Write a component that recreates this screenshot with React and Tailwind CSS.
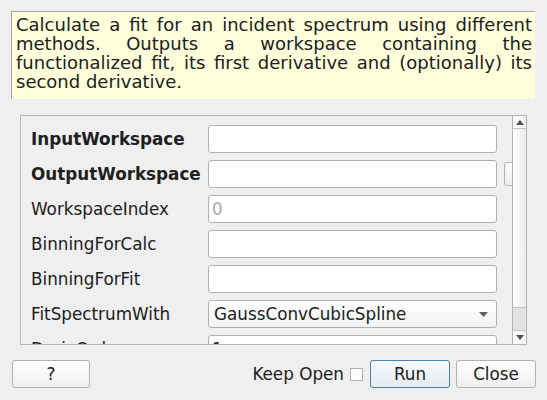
export default function App() {
  const rows = [
    { label: "InputWorkspace", bold: true },
    { label: "OutputWorkspace", bold: true, browse: true },
    { label: "WorkspaceIndex", placeholder: "0" },
    { label: "BinningForCalc" },
    { label: "BinningForFit" },
    { label: "FitSpectrumWith", combo: "GaussConvCubicSpline" },
    { label: "DerivOrder", value: "1" },
  ];
  return (
    <div className="w-[547px] h-[400px] bg-[#efefef] flex flex-col font-['DejaVu_Sans',sans-serif] text-[16.8px] text-[#202020] overflow-hidden">
      <div className="ml-[11px] mt-[11px] w-[524px] h-[88px] shrink-0 bg-[#ffffdc] border-t border-l border-[#a4a4a4] pl-[4px] pr-[3px] pt-[3px] text-[18px] leading-[19px]">
        <div className="text-justify [text-align-last:justify] whitespace-nowrap">Calculate a fit for an incident spectrum using different</div>
        <div className="text-justify [text-align-last:justify] whitespace-nowrap">methods. Outputs a workspace containing the</div>
        <div className="text-justify [text-align-last:justify] whitespace-nowrap">functionalized fit, its first derivative and (optionally) its</div>
        <div className="whitespace-nowrap">second derivative.</div>
      </div>

      <div className="ml-[20px] mt-[16px] w-[507px] h-[230px] shrink-0 border border-[#b4b4b4] flex">
        <div className="flex-1 overflow-hidden pt-[9px] pl-[10px] flex flex-col gap-[7px]">
          {rows.map((r) => (
            <div key={r.label} className="flex items-center h-[28px] shrink-0">
              <div className={"w-[177px] shrink-0 whitespace-nowrap pt-[2px] " + (r.bold ? "font-bold" : "")}>{r.label}</div>
              {r.combo ? (
                <div className="w-[289px] h-[28px] shrink-0 rounded-[3px] border border-[#b0b0b0] bg-linear-to-b from-[#fdfdfd] to-[#f3f3f3] flex items-center pl-[5px] pr-[8px]">
                  <span className="flex-1 pt-[2px]">{r.combo}</span>
                  <svg width="9" height="5" viewBox="0 0 9 5"><path d="M0 0 H9 L4.5 5 Z" fill="#606060" /></svg>
                </div>
              ) : (
                <div className="w-[289px] h-[28px] shrink-0 rounded-[3px] border border-[#b0b0b0] bg-white flex items-center pl-[3px] pt-[2px]">
                  {r.placeholder && <span className="text-[#a8a8a8]">{r.placeholder}</span>}
                  {r.value && <span>{r.value}</span>}
                </div>
              )}
              {r.browse && (
                <div className="ml-[7px] w-[40px] h-[24px] shrink-0 rounded-[3px] border border-[#b0b0b0] bg-linear-to-b from-[#fcfcfc] to-[#eeeeee]" />
              )}
            </div>
          ))}
        </div>
        <div className="w-[14px] shrink-0 border-l border-[#b4b4b4] flex flex-col">
          <div className="h-[13px] shrink-0 border-b border-[#c4c4c4] bg-linear-to-r from-white to-[#f0f0f0] flex items-center justify-center">
            <svg width="8" height="5" viewBox="0 0 8 5"><path d="M0 5 H8 L4 0 Z" fill="#505050" /></svg>
          </div>
          <div className="h-[178px] shrink-0 bg-linear-to-r from-white to-[#ececec]" />
          <div className="h-[24px] shrink-0 border-t border-b border-[#c4c4c4] bg-[#e3e3e3]" />
          <div className="flex-1 bg-linear-to-r from-white to-[#f0f0f0] flex items-center justify-center">
            <svg width="8" height="5" viewBox="0 0 8 5"><path d="M0 0 H8 L4 5 Z" fill="#505050" /></svg>
          </div>
        </div>
      </div>

      <div className="mt-[15px] h-[28px] flex items-center shrink-0">
        <button className="ml-[12px] w-[78px] h-[28px] pt-[2px] rounded-[3px] border border-[#b0b0b0] bg-linear-to-b from-[#fdfdfd] to-[#f0f0f0] flex items-center justify-center">?</button>
        <div className="flex-1" />
        <span className="whitespace-nowrap pt-[2px]">Keep Open</span>
        <div className="ml-[6px] w-[13px] h-[13px] border border-[#b0b0b0] bg-white" />
        <button className="ml-[7px] w-[80px] h-[28px] pt-[2px] rounded-[3px] border border-[#4e7fae] bg-linear-to-b from-[#f8fafc] to-[#e4ebf2] flex items-center justify-center">Run</button>
        <button className="ml-[6px] mr-[11px] w-[80px] h-[28px] pt-[2px] rounded-[3px] border border-[#b0b0b0] bg-linear-to-b from-[#fdfdfd] to-[#f0f0f0] flex items-center justify-center">Close</button>
      </div>
    </div>
  );
}
